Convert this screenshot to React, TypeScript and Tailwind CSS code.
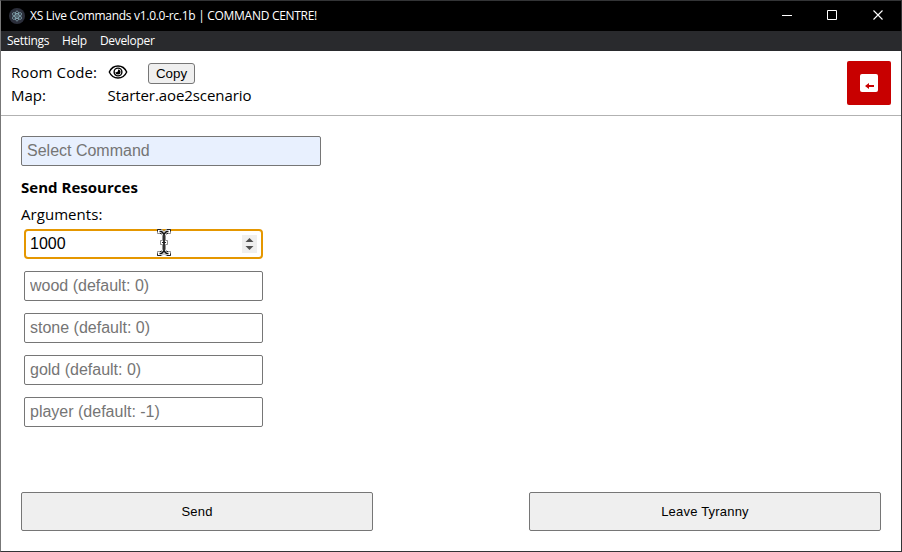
import React from 'react';

const ui = "font-['Open_Sans','Noto_Sans',sans-serif]";
const arial = "font-['Liberation_Sans',sans-serif]";

function AppIcon() {
  return (
    <svg width="16" height="16" viewBox="0 0 16 16" fill="none" stroke="#8fb3bd" strokeWidth="0.7">
      <circle cx="8" cy="8" r="8" fill="#2b2e3a" stroke="none" />
      <ellipse cx="8" cy="8" rx="5.2" ry="2" transform="rotate(30 8 8)" />
      <ellipse cx="8" cy="8" rx="5.2" ry="2" transform="rotate(90 8 8)" />
      <ellipse cx="8" cy="8" rx="5.2" ry="2" transform="rotate(150 8 8)" />
      <circle cx="8" cy="8" r="0.8" fill="#8fb3bd" stroke="none" />
    </svg>
  );
}

function TitleBar() {
  return (
    <div className="flex h-[30px] shrink-0 items-center bg-black pl-2 text-white">
      <AppIcon />
      <span className="ml-[5px] whitespace-nowrap text-[12px] leading-[30px] tracking-[-0.29px]">
        XS Live Commands v1.0.0-rc.1b | COMMAND CENTRE!
      </span>
      <svg className="ml-auto block" width="138" height="30" viewBox="0 0 138 30" fill="none" stroke="#fff">
        <path d="M19 14.500h10" />
        <path d="M64.500 9.500h9v9h-9z" />
        <path d="M110.500 9.500l9 9M119.500 9.500l-9 9" strokeWidth="1.1" />
      </svg>
    </div>
  );
}

function MenuBar() {
  return (
    <div className="flex h-5 shrink-0 items-center gap-[13px] bg-[#292a2d] pl-1.5 text-[12px] leading-5 tracking-[-0.3px] text-white">
      <span>Settings</span>
      <span>Help</span>
      <span>Developer</span>
    </div>
  );
}

function EyeIcon() {
  return (
    <svg width="20" height="16" viewBox="0 0 20 16" fill="none" stroke="#000">
      <path d="M1.300 8C3 4.200 6.200 2 10 2s7 2.200 8.700 6C17 11.800 13.800 14 10 14S3 11.800 1.300 8z" strokeWidth="1.400" />
      <circle cx="10" cy="8" r="3.900" strokeWidth="1.400" />
      <path d="M10 5.500a2.500 2.500 0 1 1-2.500 2.500C9 8.600 10.500 7.500 10 5.500z" fill="#000" stroke="none" />
    </svg>
  );
}

function Header() {
  return (
    <div className="flex h-[65px] shrink-0 items-start justify-between border-b border-[#b2b2b2] px-2.5 text-[15px] text-black">
      <div className="grid grid-cols-[96.500px_auto] pt-2.5">
        <span className="h-[23px] whitespace-nowrap leading-[23px] tracking-[0.1px]">Room Code:</span>
        <div className="-mt-px flex h-[23px] items-center">
          <EyeIcon />
          <button className={`${arial} ml-[20.500px] mt-[3px] h-[21px] w-[47px] rounded-[3px] border border-[#767676] bg-[#efefef] text-[13.333px] leading-[19px]`}>
            Copy
          </button>
        </div>
        <span className="h-[23px] leading-[23px]">Map:</span>
        <span className="h-[23px] leading-[23px] tracking-[-0.08px]">Starter.aoe2scenario</span>
      </div>
      <button className="mt-2.5 flex size-11 items-center justify-center rounded-[2px] bg-[#c80000]">
        <svg width="18" height="18" viewBox="0 0 18 18">
          <rect width="18" height="18" rx="2" fill="#fff" />
          <path d="M5 12l4-3v2h5v2H9v2z" fill="#c80000" />
        </svg>
      </button>
    </div>
  );
}

function TextCursor() {
  return (
    <svg className="absolute left-[130px] -top-[2px]" width="16" height="27" viewBox="0 0 16 27" fill="none">
      <path d="M1.500 .5h4.500l2 2 2-2h4.500v4H11l-1.500 2v5h2v4h-2v5l1.500 2h3.500v4H10l-2-2-2 2H1.500v-4H5l1.500-2v-5h-2v-4h2v-5L5 4.500H1.500z" fill="#fff" stroke="#777" strokeWidth="0.8" />
      <path d="M1.500 2.500v-2H5M11 .5h3.500v2M1.500 24.500v2H5M11 26.500h3.500v-2M4 4.500h1.500M10.500 4.500H12M4 22.500h1.500M10.500 22.500H12" stroke="#222" />
      <path d="M3.500 2.500h2L8 5l2.500-2.500h2M8 5v17M3.500 24.500h2L8 22l2.500 2.500h2" stroke="#111" strokeWidth="1.700" />
      <path d="M6 13.500h4" stroke="#222" />
    </svg>
  );
}

const field = "block h-[30px] w-[239px] rounded-[2px] border border-[#767676] bg-white px-[5px] text-[16px] leading-[28px] text-black outline-none placeholder:text-[#757575]";

export default function App() {
  return (
    <div className={`${ui} flex h-[552px] w-[902px] flex-col overflow-hidden border border-[#333436] border-l-[#777] bg-white`}>
      <TitleBar />
      <MenuBar />
      <Header />
      <main className="flex min-h-0 flex-1 flex-col px-5 pb-5 pt-5 text-[15px] text-black">
        <input
          placeholder="Select Command"
          className={`${arial} block h-[30px] w-[300px] shrink-0 rounded-[2px] border border-[#767676] bg-[#e8f0fe] px-[5px] text-[16px] outline-none placeholder:text-[#757575]`}
        />
        <h1 className="mt-[9px] h-6 font-bold leading-6 tracking-[0.02px]">Send Resources</h1>
        <p className="mt-[3px] h-6 leading-6 tracking-[0.05px]">Arguments:</p>
        <div className={`${arial} ml-[3px] mt-[3px] flex flex-col gap-3`}>
          <div className="relative flex h-[30px] w-[239px] items-center rounded-[4px] border-2 border-[#e59700] bg-white pl-1 pr-1">
            <span className="text-[16px] leading-[26px]">1000</span>
            <svg className="ml-auto" width="15" height="18" viewBox="0 0 15 18">
              <rect width="15" height="18" fill="#efefef" />
              <path d="M3.500 7L7.500 3l4 4zM3.500 11l4 4 4-4z" fill="#505050" />
            </svg>
            <TextCursor />
          </div>
          <input className={field} placeholder="wood (default: 0)" />
          <input className={field} placeholder="stone (default: 0)" />
          <input className={field} placeholder="gold (default: 0)" />
          <input className={field} placeholder="player (default: -1)" />
        </div>
        <div className={`${arial} mt-auto flex justify-between text-[13px] tracking-[0.2px]`}>
          <button className="h-[39px] w-[352px] rounded-[2px] border border-[#767676] bg-[#efefef]">Send</button>
          <button className="h-[39px] w-[352px] rounded-[2px] border border-[#767676] bg-[#efefef]">Leave Tyranny</button>
        </div>
      </main>
    </div>
  );
}
